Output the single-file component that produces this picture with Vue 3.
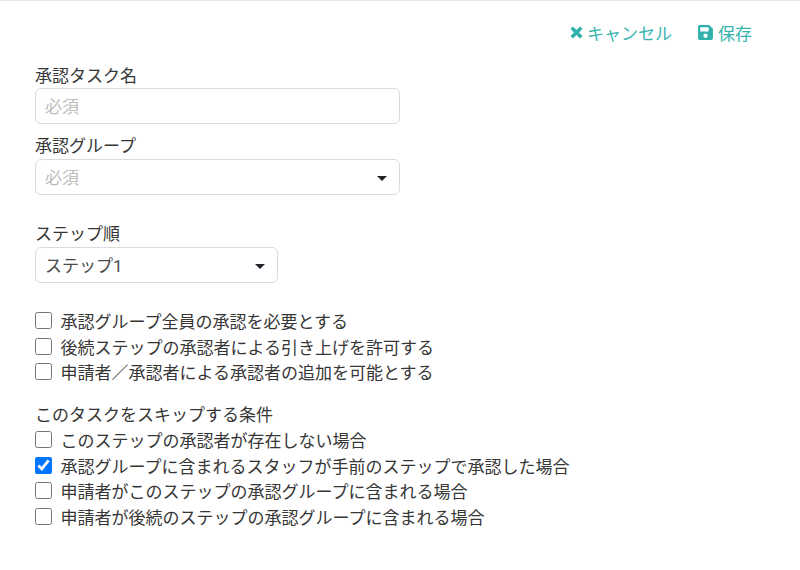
<script setup>
const group1 = [
  { label: '承認グループ全員の承認を必要とする', checked: false },
  { label: '後続ステップの承認者による引き上げを許可する', checked: false },
  { label: '申請者／承認者による承認者の追加を可能とする', checked: false }
]
const group2 = [
  { label: 'このステップの承認者が存在しない場合', checked: false },
  { label: '承認グループに含まれるスタッフが手前のステップで承認した場合', checked: true },
  { label: '申請者がこのステップの承認グループに含まれる場合', checked: false },
  { label: '申請者が後続のステップの承認グループに含まれる場合', checked: false }
]
</script>

<template>
  <div class="page">
    <div class="actions">
      <a class="action cancel">
        <svg class="ico-x" viewBox="0 0 12 12"><path d="M1.6 1.6 L10.4 10.4 M10.4 1.6 L1.6 10.4" /></svg>
        <span>キャンセル</span>
      </a>
      <a class="action">
        <svg class="ico-save" viewBox="0 0 448 512"><path d="M433.9 129.9l-83.9-83.9A48 48 0 0 0 316.1 32H48C21.5 32 0 53.5 0 80v352c0 26.5 21.5 48 48 48h352c26.5 0 48-21.5 48-48V163.9a48 48 0 0 0-14.1-34zM224 416c-35.3 0-64-28.7-64-64 0-35.3 28.7-64 64-64s64 28.7 64 64c0 35.3-28.7 64-64 64zm96-304.5V212c0 6.6-5.4 12-12 12H76c-6.6 0-12-5.4-12-12V108c0-6.6 5.4-12 12-12h228.5c3.2 0 6.2 1.3 8.5 3.5l3.5 3.5c2.3 2.3 3.5 5.3 3.5 8.5z" /></svg>
        <span>保存</span>
      </a>
    </div>
    <div class="form">
      <label class="lab top">承認タスク名</label>
      <input class="ctl wide text" placeholder="必須" />
      <label class="lab second">承認グループ</label>
      <div class="ctl wide sel placeholder">必須<i class="caret"></i></div>
      <label class="lab third">ステップ順</label>
      <div class="ctl narrow sel">ステップ1<i class="caret"></i></div>
      <div class="checks first">
        <label v-for="c in group1" :key="c.label" class="chk">
          <input type="checkbox" :checked="c.checked" /><span>{{ c.label }}</span>
        </label>
      </div>
      <div class="lab skip">このタスクをスキップする条件</div>
      <div class="checks">
        <label v-for="c in group2" :key="c.label" class="chk">
          <input type="checkbox" :checked="c.checked" /><span>{{ c.label }}</span>
        </label>
      </div>
    </div>
  </div>
</template>

<style scoped>
.page {
  width: 800px;
  height: 570px;
  box-sizing: border-box;
  border-top: 1px solid #e4e6e8;
  background: #fff;
  color: #363636;
  font-family: Roboto, "Noto Sans CJK JP", sans-serif;
  font-size: 17px;
  overflow: hidden;
}
.actions {
  display: flex;
  justify-content: flex-end;
  gap: 26px;
  padding: 18px 48px 0 0;
  height: 61px;
  box-sizing: border-box;
}
.action {
  display: flex;
  align-items: center;
  gap: 5px;
  height: 26px;
  color: #37b3af;
}
.cancel { gap: 4px; }
.ico-x { width: 13px; height: 13px; fill: none; stroke: #2fb0ab; stroke-width: 3.2; }
.ico-save { width: 15px; height: 17px; fill: #2fb0ab; }
.form {
  padding: 0 0 0 35px;
  display: flex;
  flex-direction: column;
  align-items: flex-start;
}
.lab { line-height: 22px; padding: 2px 0 1.5px; }
.lab.top { padding: 3px 0 0.5px; }
.second { margin-top: 9px; }
.third { margin-top: 26px; }
.ctl {
  box-sizing: border-box;
  height: 36.5px;
  border: 1px solid #dbdbdb;
  border-radius: 6px;
  padding: 0 9px;
  font: inherit;
  background: #fff;
  color: #4a4a4a;
  display: flex;
  align-items: center;
  position: relative;
}
.text { padding-top: 2px; }
.ctl::placeholder, .placeholder { color: #bdbdbd; }
.wide { width: 365px; }
.narrow { width: 243px; padding-bottom: 1px; }
.caret {
  position: absolute;
  right: 12px;
  top: 16px;
  border-left: 5px solid transparent;
  border-right: 5px solid transparent;
  border-top: 5px solid #212529;
}
.checks { display: flex; flex-direction: column; }
.checks.first { margin-top: 25px; }
.skip { margin-top: 17px; }
.chk { display: flex; align-items: center; height: 25.5px; gap: 8.5px; }
.chk input { width: 17px; height: 17px; margin: 0; }
</style>
